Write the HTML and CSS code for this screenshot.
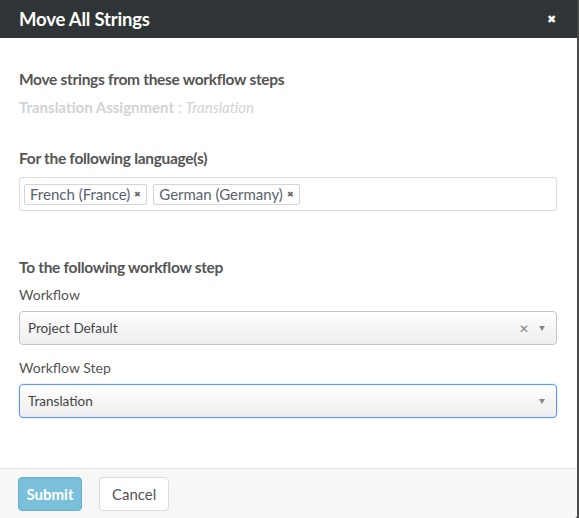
FILE: index.html
```html
<!DOCTYPE html>
<html>
<head>
<meta charset="utf-8">
<link rel="stylesheet" href="styles.css">
</head>
<body>
<div class="modal">
  <div class="header">
    <h1 class="title">Move All Strings</h1>
    <span class="close">&#x2716;</span>
  </div>
  <div class="body">
    <h2 class="section">Move strings from these workflow steps</h2>
    <p class="source"><b>Translation Assignment</b> : <i>Translation</i></p>

    <h2 class="section sec2">For the following language(s)</h2>
    <div class="tags">
      <span class="tag">French (France) <span class="tx">&#x2716;</span></span>
      <span class="tag">German (Germany) <span class="tx">&#x2716;</span></span>
    </div>

    <h2 class="section sec3">To the following workflow step</h2>
    <label class="lbl">Workflow</label>
    <div class="select">
      <span class="val">Project Default</span>
      <span class="clear">&#x2715;</span>
      <span class="arrow"></span>
    </div>
    <label class="lbl lbl2">Workflow Step</label>
    <div class="select focus">
      <span class="val">Translation</span>
      <span class="arrow"></span>
    </div>
  </div>
  <div class="footer">
    <button class="btn primary">Submit</button>
    <button class="btn">Cancel</button>
  </div>
</div>
</body>
</html>
```

FILE: styles.css
```css
html, body {
  margin: 0;
  padding: 0;
  height: 100%;
}
body {
  background: #4a4a4a;
  font-family: "Lato", "Open Sans", sans-serif;
  color: #555;
}
.modal {
  width: 577px;
  height: 518px;
  background: #fff;
  display: flex;
  flex-direction: column;
  border-bottom-right-radius: 3px;
  overflow: hidden;
}
.header {
  height: 38px;
  background: #2f3536;
  display: flex;
  align-items: center;
  justify-content: space-between;
  padding: 0 21px 0 19px;
  flex: none;
}
.title {
  margin: 0;
  color: #fff;
  font-size: 18.5px;
  font-weight: 700;
  letter-spacing: -0.2px;
}
.close {
  color: #fff;
  font-size: 11px;
}
.body {
  flex: 1;
  padding: 31px 20px 0 19px;
}
.section {
  margin: 0;
  font-size: 15.5px;
  font-weight: 700;
  color: #555;
  letter-spacing: -0.3px;
  line-height: 20px;
}
.source {
  margin: 8px 0 0;
  font-size: 15px;
  color: #d0d3d5;
  line-height: 20px;
}
.source i { font-weight: 400; }
.sec2 { margin-top: 31px; }
.tags {
  margin-top: 9px;
  height: 32px;
  border: 1px solid #ddd;
  border-radius: 3px;
  display: flex;
  align-items: center;
  gap: 6px;
  padding: 0 4px;
}
.tag {
  border: 1px solid #d5d5d5;
  border-radius: 2px;
  height: 19px;
  line-height: 19px;
  padding: 0 5px;
  font-size: 15px;
  color: #5b6170;
  display: flex;
  align-items: center;
  gap: 4px;
}
.tx {
  font-size: 8px;
  color: #666;
}
.sec3 { margin-top: 46px; }
.lbl {
  display: block;
  margin-top: 8px;
  font-size: 14px;
  color: #555;
  line-height: 20px;
}
.lbl2 { margin-top: 13px; }
.select {
  margin-top: 6px;
  height: 32px;
  border: 1px solid #c4c4c4;
  border-radius: 4px;
  background: linear-gradient(#fff 0%, #f7f7f7 40%, #eee 100%);
  display: flex;
  align-items: center;
  padding: 0 11px 0 8px;
  font-size: 13.5px;
  color: #444;
}
.select.focus {
  border-color: #5897fb;
  box-shadow: 0 0 2px rgba(88,151,251,0.4);
}
.val { flex: 1; }
.clear {
  color: #888;
  font-size: 12px;
  margin-right: 10px;
}
.arrow {
  width: 0;
  height: 0;
  border-left: 3px solid transparent;
  border-right: 3px solid transparent;
  border-top: 5px solid #888;
}
.footer {
  flex: none;
  height: 49px;
  border-top: 1px solid #e5e5e5;
  background: #f7f7f7;
  display: flex;
  align-items: center;
  gap: 17px;
  padding: 0 0 0 18px;
}
.btn {
  height: 34px;
  border: 1px solid #ddd;
  border-radius: 4px;
  background: #fff;
  font-family: inherit;
  font-size: 15px;
  color: #555;
  padding: 0 12px;
}
.btn.primary {
  background: #7ac0da;
  border-color: #6bb0cc;
  color: #fff;
  font-weight: 700;
  width: 64px;
  padding: 0;
}
```
